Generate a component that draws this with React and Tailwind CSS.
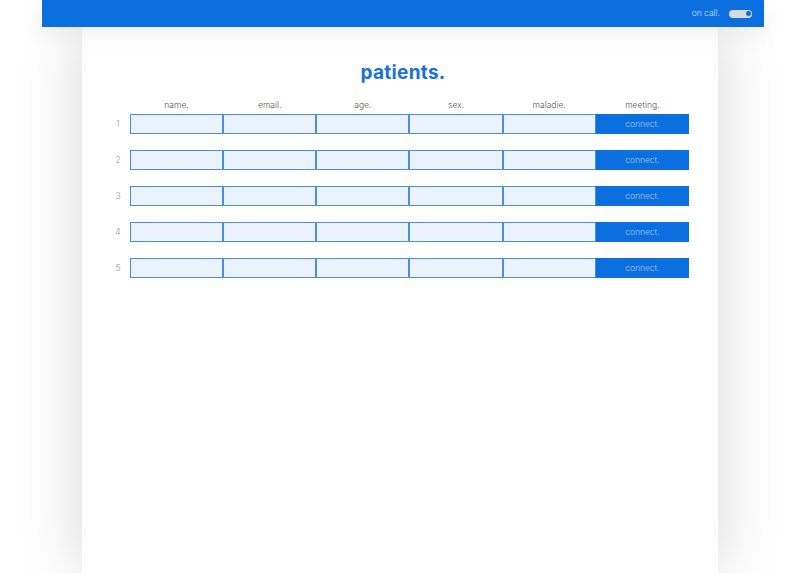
import React from 'react';

const columns = ['name.', 'email.', 'age.', 'sex.', 'maladie.'];
const rows = [1, 2, 3, 4, 5];

const App = () => {
  return (
    <div className="min-h-screen bg-white overflow-hidden" style={{ fontFamily: 'Inter, "Noto Sans", sans-serif' }}>
      <header className="ml-[42px] w-[722px] h-[27px] bg-[#0b6fe0] flex items-center justify-end pr-[12px] relative z-10 shadow-[0_6px_24px_rgba(0,0,0,0.07)]">
        <span className="text-[8.5px] font-light text-[#cfe0f8] mr-[9px]">on call.</span>
        <div className="w-[23px] h-[8px] rounded-full bg-[#d6d9de] flex items-center justify-end pr-[1.5px]">
          <div className="w-[5px] h-[5px] rounded-full bg-[#0b6fe0]" />
        </div>
      </header>

      <main className="ml-[82px] w-[636px] min-h-[546px] bg-white shadow-[0_0_60px_rgba(0,0,0,0.16)]">
        <h1 className="pt-[34px] pl-[6px] text-center text-[19px] leading-[24px] font-bold tracking-[0.3px] text-[#1a70d6]">
          patients.
        </h1>

        <div className="ml-[24px] mt-[13px] w-[583px]">
          <div className="grid grid-cols-[24px_repeat(6,93.17px)] h-[14px] items-center">
            <div />
            {columns.map((c) => (
              <div key={c} className="text-center text-[8.5px] font-light text-[#555]">{c}</div>
            ))}
            <div className="text-center text-[8.5px] font-light text-[#555]">meeting.</div>
          </div>

          <div className="flex flex-col gap-[16px] mt-[2px]">
            {rows.map((r) => (
              <div key={r} className="grid grid-cols-[24px_repeat(6,93.17px)] h-[20px]">
                <div className="flex items-center justify-center text-[8.5px] font-light text-[#999]">{r}</div>
                {columns.map((c) => (
                  <div key={c} className="bg-[#eaf2fd] border border-[#4a8ede]" />
                ))}
                <button className="bg-[#0b6fe0] text-[8.5px] font-light text-[#a9cbf5] flex items-center justify-center">
                  connect.
                </button>
              </div>
            ))}
          </div>
        </div>
      </main>
    </div>
  );
};

export default App;
